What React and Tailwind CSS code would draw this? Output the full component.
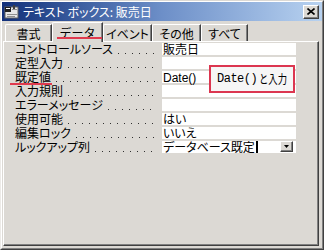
export default function App() {
  const rows = [
    ['コントロールソース', '販売日'],
    ['定型入力', ''],
    ['既定値', 'Date()'],
    ['入力規則', ''],
    ['エラーメッセージ', ''],
    ['使用可能', 'はい'],
    ['編集ロック', 'いいえ'],
    ['ルックアップ列', 'データベース既定', true],
  ];
  const tabs = [
    ['書式', 'w-[47px]'],
    ['データ', 'w-[51px]', true],
    ['イベント', 'w-[49px]'],
    ['その他', 'w-[49px]'],
    ['すべて', 'w-[47px]'],
  ];
  const jp = "font-['Noto_Sans_CJK_JP',sans-serif]";
  return (
    <div className={`w-[324px] h-[250px] bg-[#dcd9d4] border border-t-[#dcd9d4] border-l-[#eceae7] border-r-[#404040] border-b-[#404040] text-black ${jp}`}>
      <div className="h-full flex flex-col border border-t-white border-l-white border-r-[#808080] border-b-[#808080]">
        {/* title bar */}
        <div className="h-[19px] flex items-center bg-linear-to-r from-[#12307a] via-[#6d8fc8] to-[#b8d2f0]">
          <svg width="15" height="14" viewBox="0 0 15 14" className="ml-[2px]">
            <rect x="1" y="2" width="13" height="11" fill="#e8e8e8" stroke="#606060" />
            <rect x="1" y="2" width="6" height="5" fill="#202020" />
            <rect x="2" y="3" width="4" height="1" fill="#ffffff" />
            <rect x="8" y="4" width="5" height="1" fill="#909090" />
            <rect x="3" y="9" width="10" height="1" fill="#909090" />
            <rect x="3" y="11" width="8" height="1" fill="#909090" />
            <rect x="9" y="0" width="2" height="4" fill="#404040" />
          </svg>
          <span className="ml-[4px] text-[12px] leading-[14px] text-white [font-feature-settings:'palt'] whitespace-nowrap">
            テキスト ボックス: 販売日
          </span>
          <div className="ml-auto mr-[3px] w-[16px] h-[14px] bg-[#dcd9d4] border border-t-white border-l-white border-r-[#404040] border-b-[#404040] shadow-[inset_-1px_-1px_0_#808080] flex items-center justify-center">
            <svg width="8" height="7" viewBox="0 0 8 7">
              <path d="M0.5 0.5 L7.5 6.5 M7.5 0.5 L0.5 6.5" stroke="#000" strokeWidth="1.6" />
            </svg>
          </div>
        </div>
        {/* tabs */}
        <div className="h-[20px] flex items-end pl-[3px]">
          {tabs.map(([t, w, active]) =>
            active ? (
              <div
                key={t}
                className={`${w} h-[20px] -mb-[1px] relative z-10 bg-[#dcd9d4] border-t border-l border-r border-t-white border-l-white border-r-[#404040] shadow-[inset_-1px_0_0_#808080] rounded-tl-[2px] flex items-start justify-center pt-[3px] text-[12px] leading-[14px] whitespace-nowrap`}
              >
                {t}
                <div className="absolute left-[4px] top-[14px] w-[45px] h-[2px] bg-[#e03a4e]" />
              </div>
            ) : (
              <div
                key={t}
                className={`${w} h-[17px] border-t border-l border-r border-t-white border-l-white border-r-[#404040] shadow-[inset_-1px_0_0_#808080] rounded-tl-[2px] flex items-start justify-center pt-[2px] text-[12px] leading-[14px] whitespace-nowrap [font-feature-settings:'palt']`}
              >
                {t}
              </div>
            )
          )}
        </div>
        {/* panel */}
        <div className="h-[205px] ml-[1px] mr-[3px] relative border border-t-white border-l-white border-r-[#404040] border-b-[#404040] shadow-[inset_-1px_-1px_0_#808080]">
          <div className="flex flex-col">
            {rows.map(([label, value, combo]) => (
              <div key={label} className="h-[14px] flex">
                <div className="w-[158px] pl-[11px] pr-[5px] flex items-end">
                  <span className="text-[12px] leading-[14px] whitespace-nowrap [font-feature-settings:'palt']">{label}</span>
                  <div className="flex-1 h-[1px] mb-[2px] ml-[2px] bg-[linear-gradient(to_right,transparent_3px,#303030_3px,#303030_4px,transparent_4px)] bg-[length:7px_1px] bg-repeat-x" />
                </div>
                <div className="w-[134px] h-[12px] mt-[1px] bg-white relative pl-[1px] text-[12px] leading-[12px] whitespace-nowrap">
                  {value === 'Date()' ? (
                    <span className="font-['Liberation_Sans',sans-serif]">Date()</span>
                  ) : (
                    <span className="[font-feature-settings:'palt']">{value}</span>
                  )}
                  {combo && (
                    <>
                      <div className="absolute left-[94px] top-0 w-[2px] h-[12px] bg-black" />
                      <div className="absolute right-[3px] top-0 w-[13px] h-[11px] bg-[#dcd9d4] border border-t-white border-l-white border-r-[#404040] border-b-[#404040] shadow-[inset_-1px_-1px_0_#808080] flex items-center justify-center">
                        <svg width="5" height="3" viewBox="0 0 5 3">
                          <path d="M0 0 H5 L2.5 3 Z" fill="#000" />
                        </svg>
                      </div>
                    </>
                  )}
                </div>
              </div>
            ))}
          </div>
          <div className="absolute left-[6px] top-[41px] w-[42px] h-[2px] bg-[#e03a4e]" />
          <div className="absolute left-[205px] top-[23px] w-[86px] h-[28px] border-2 border-[#dc3650] bg-[#f6f6f6] flex items-center pl-[6px] whitespace-nowrap">
            <span className="font-['Liberation_Mono',monospace] text-[12px] leading-[14px] tracking-[-0.5px]">Date()</span>
            <span className="ml-[2px] inline-block w-[28px] text-[12px] leading-[14px] scale-x-[0.78] origin-left">と入力</span>
          </div>
        </div>
      </div>
    </div>
  );
}
